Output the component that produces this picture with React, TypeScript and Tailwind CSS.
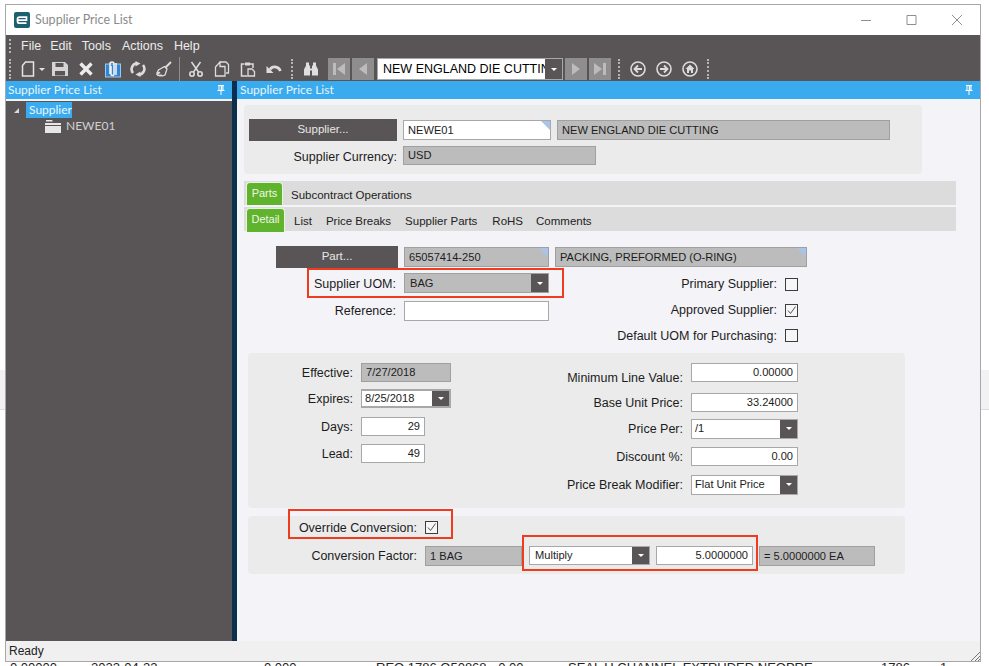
import type { ReactNode } from "react";

const ARIAL = "font-['Liberation_Sans',Arial,sans-serif]";

function Handle({ className = "" }: { className?: string }) {
  return <div className={`h-[20px] w-[2px] border-l-2 border-dotted border-[#b5b3b3] ${className}`} />;
}

function Glyph({ className = "", children }: { className?: string; children: ReactNode }) {
  return (
    <svg viewBox="0 0 16 16" className={`h-[16px] w-[16px] shrink-0 ${className}`} fill="none" stroke="#dcdcdc" strokeWidth="1.6">
      {children}
    </svg>
  );
}

function NavButton({ className = "", children }: { className?: string; children: ReactNode }) {
  return (
    <div className={`flex h-[22px] w-[22px] shrink-0 items-center justify-center bg-[#8f8d8d] ${className}`}>
      <svg viewBox="0 0 16 16" className="h-[16px] w-[16px]" fill="#bdbcbc">
        {children}
      </svg>
    </div>
  );
}

function Toolbar() {
  return (
    <div className="flex h-[24px] items-center pl-[3px]">
      <Handle />
      <svg viewBox="0 0 14 16" className="ml-[10px] h-[16px] w-[14px]" fill="none" stroke="#e4e4e4" strokeWidth="1.5">
        <path d="M4.5 1h8v14h-11V4.5z" />
      </svg>
      <div className="ml-[4px] h-0 w-0 border-x-[3px] border-t-[3px] border-x-transparent border-t-[#e4e4e4]" />
      <Glyph className="ml-[7px]">
        <path fill="#d4d4d4" stroke="none" fillRule="evenodd" d="M0 1h13l3 3v11H0zM3.5 2v4h8V2zM3 10v4.5h10V10z" />
      </Glyph>
      <svg viewBox="0 0 14 14" className="ml-[11px] h-[14px] w-[14px]" stroke="#ececec" strokeWidth="3.4">
        <path d="M1.5 1.5l11 11M12.5 1.5l-11 11" />
      </svg>
      <svg viewBox="0 0 16 18" className="ml-[12px] h-[18px] w-[16px]">
        <rect x="0.5" y="4" width="15" height="13" fill="#2f86d6" stroke="#9cc8ef" />
        <path d="M5 14V4a2 2 0 0 1 4 0v10a1.4 1.4 0 0 1-3 0V6M11 15V3" fill="none" stroke="#f2f2f2" strokeWidth="1.6" />
      </svg>
      <Glyph className="ml-[9px]">
        <path d="M3 12A6 6 0 0 1 7 2.2" strokeWidth="2.6" />
        <path d="M13 4a6 6 0 0 1-4 9.8" strokeWidth="2.6" />
        <path fill="#dcdcdc" stroke="none" d="M5.5 0l5 2.5-5 3zM10.5 16l-5-2.500 5-3z" />
      </Glyph>
      <Glyph className="ml-[10px]">
        <path d="M15 1L9.500 6.500" strokeWidth="2" />
        <path d="M8.500 5.500l2.500 2.500-2 6-3 1-1-1-1 1-1-1-1 .5-1-1 3-2-3 .5 1.500-3z" strokeWidth="1.300" />
      </Glyph>
      <div className="ml-[7px] h-[26px] w-px self-start bg-[#8d8b8b]" />
      <Glyph className="ml-[8px]">
        <path d="M12.500 1L5.500 11M3.500 1l7 10" strokeWidth="1.500" />
        <circle cx="4" cy="13" r="2.200" />
        <circle cx="12" cy="13" r="2.200" />
      </Glyph>
      <Glyph className="ml-[10px]">
        <path d="M6 1h6l2.500 2.500V12H12M6 1L1.500 6v9H11V5.500H6z" strokeWidth="1.300" />
      </Glyph>
      <Glyph className="ml-[10px]">
        <path d="M4.500 3H1.500v12h6M10 3h3v4" strokeWidth="1.500" />
        <path d="M5 1.500h5v3H5z" fill="#dcdcdc" stroke="none" />
        <path d="M8 8h4l2.500 2.500V15H8z" strokeWidth="1.300" />
      </Glyph>
      <Glyph className="ml-[10px]">
        <path d="M4 8.500C6 5 12 4.500 14.500 10" strokeWidth="2.600" />
        <path fill="#dcdcdc" stroke="none" d="M0.500 5v7h7z" />
      </Glyph>
      <Handle className="ml-[9px]" />
      <Glyph className="ml-[10px]">
        <path fill="#e0dfdf" stroke="none" d="M3 1.500h3v3h1v3h2v-3h1v-3h3v3l2 4v6h-6v-5H7v5H1v-6l2-4z" />
      </Glyph>
      <NavButton className="ml-[9px]">
        <path d="M2 2h3v12H2zM14 2v12L6 8z" />
      </NavButton>
      <NavButton className="ml-[2px]">
        <path d="M12 2v12L4 8z" />
      </NavButton>
      <div className="ml-[3px] flex h-[22px] w-[186px] shrink-0 items-center border border-[#a9a8a8] bg-white">
        <div className={`h-full w-[167px] overflow-hidden whitespace-nowrap pl-[5px] text-[12.5px] leading-[20px] text-black ${ARIAL}`}>
          NEW ENGLAND DIE CUTTING
        </div>
        <div className="flex h-full flex-1 items-center justify-center bg-[#595556]">
          <div className="h-0 w-0 border-x-[3px] border-t-[3px] border-x-transparent border-t-white" />
        </div>
      </div>
      <NavButton className="ml-[2px]">
        <path d="M4 2v12l8-6z" />
      </NavButton>
      <NavButton className="ml-[2px]">
        <path d="M2 2v12l8-6zM11 2h3v12h-3z" />
      </NavButton>
      <Handle className="ml-[7px]" />
      <Glyph className="ml-[10px]">
        <circle cx="8" cy="8" r="7" />
        <path d="M12 8H5M8 4.500L4.500 8 8 11.500" strokeWidth="1.800" />
      </Glyph>
      <Glyph className="ml-[10px]">
        <circle cx="8" cy="8" r="7" />
        <path d="M4 8h7M8 4.500L11.500 8 8 11.500" strokeWidth="1.800" />
      </Glyph>
      <Glyph className="ml-[10px]">
        <circle cx="8" cy="8" r="7" />
        <path fill="#dcdcdc" stroke="none" d="M8 3.500L12.500 8H11v4H9V9.500H7V12H5V8H3.500z" />
      </Glyph>
      <Handle className="ml-[9px]" />
    </div>
  );
}

function Pin({ className = "" }: { className?: string }) {
  return (
    <svg viewBox="0 0 8 10" className={`h-[10px] w-[8px] ${className}`} fill="none" stroke="#fff" strokeWidth="1">
      <path d="M1 .5h6M2 .5v5h4v-5M.5 5.500h7M4 5.500V10" />
      <path d="M4.500 1v4" stroke="#fff" strokeWidth="1.500" />
    </svg>
  );
}

function PaneHeader({ title, className = "" }: { title: string; className?: string }) {
  return (
    <div className={`flex h-[18px] items-center justify-between bg-[#3aabee] pl-[2px] pr-[7px] font-['Lato',sans-serif] text-[12px] text-[#e8f5fd] ${className}`}>
      <span>{title}</span>
      <Pin />
    </div>
  );
}

function TreePane() {
  return (
    <div className="flex w-[226px] shrink-0 flex-col">
      <PaneHeader title="Supplier Price List" />
      <div className="flex flex-1 flex-col border-t-2 border-[#f3f3f8] bg-[#595556] font-['Lato',sans-serif] text-[12px]">
        <div className="flex h-[17px] items-center pl-[8px] pt-px">
          <div className="h-0 w-0 border-b-[5px] border-l-[5px] border-b-[#d8d8d8] border-l-transparent" />
          <span className="ml-[7px] flex h-[16px] w-[46px] items-center bg-[#3aabee] pl-[3px] text-[#eaf6fd]">Supplier</span>
        </div>
        <div className="flex h-[16px] items-center pl-[39px]">
          <svg viewBox="0 0 16 13" className="h-[13px] w-[16px]" fill="#e6e6e6">
            <path d="M1 0h6l1 1.500H1zM0 3h16v2H0zM0 6h16v7H0z" />
          </svg>
          <span className="ml-[5px] text-[#d0d0d0]">NEWE01</span>
        </div>
      </div>
    </div>
  );
}

function Label({ width, className = "", children }: { width: string; className?: string; children: ReactNode }) {
  return <div className={`shrink-0 whitespace-nowrap text-right text-[12.5px] leading-[14px] text-[#1c1c1c] ${width} ${className}`}>{children}</div>;
}

function Corner() {
  return <div className="absolute right-0 top-0 h-0 w-0 border-l-[9px] border-t-[9px] border-l-transparent border-t-[#a9c4e6]" />;
}

function Field({
  box,
  readOnly = false,
  corner = false,
  right = false,
  children,
}: {
  box: string;
  readOnly?: boolean;
  corner?: boolean;
  right?: boolean;
  children?: ReactNode;
}) {
  return (
    <div
      className={`relative flex shrink-0 items-center whitespace-nowrap border px-[4px] text-[11.1px] text-[#1c1c1c] ${box} ${
        readOnly ? "border-[#a0a0a0] bg-[#bcbcbc]" : "border-[#a8a8a8] bg-white"
      } ${right ? "justify-end" : ""}`}
    >
      {children}
      {corner && <Corner />}
    </div>
  );
}

function Dropdown({ box, readOnly = false, children }: { box: string; readOnly?: boolean; children: ReactNode }) {
  return (
    <div className={`flex shrink-0 items-center border text-[11.1px] text-[#1c1c1c] ${box} ${readOnly ? "border-[#a0a0a0] bg-[#bcbcbc]" : "border-[#a8a8a8] bg-white"}`}>
      <span className="flex-1">{children}</span>
      <div className="flex h-full w-[17px] items-center justify-center bg-[#595556]">
        <div className="h-0 w-0 border-x-[3px] border-t-[3px] border-x-transparent border-t-white" />
      </div>
    </div>
  );
}

function Check({ checked = false }: { checked?: boolean }) {
  return (
    <div className="flex h-[13px] w-[13px] shrink-0 items-center justify-center border border-[#3c3c3c] bg-[#f6f6f8]">
      {checked && (
        <svg viewBox="0 0 11 11" className="h-[11px] w-[11px]" fill="none" stroke="#555" strokeWidth="1">
          <path d="M2 5.500L4.500 8.500 9.500 1.500" />
        </svg>
      )}
    </div>
  );
}

function DarkButton({ box, children }: { box: string; children: ReactNode }) {
  return <div className={`flex shrink-0 items-center justify-center bg-[#595556] text-[11.5px] text-[#e8e8e8] ${box}`}>{children}</div>;
}

function TabStrip({ active, activeBox, tabs, className = "" }: { active: string; activeBox: string; tabs: [string, string][]; className?: string }) {
  return (
    <div className={`flex h-[24px] w-[712px] items-start bg-[#dcdcdc] pl-[2px] pt-px text-[11.5px] text-[#222] ${className}`}>
      <div className={`flex items-center justify-center rounded-t-[4px] border border-b-0 border-[#e8f4dc] bg-[#60b32c] pb-[2px] text-[11px] text-[#eef7e6] ${activeBox}`}>{active}</div>
      {tabs.map(([name, margin]) => (
        <div key={name} className={`whitespace-nowrap pt-[5px] ${margin}`}>
          {name}
        </div>
      ))}
    </div>
  );
}

function FormRow({ className = "", children }: { className?: string; children: ReactNode }) {
  return <div className={`flex items-center ${className}`}>{children}</div>;
}

function Form() {
  return (
    <div className={`flex min-w-0 flex-1 flex-col ${ARIAL}`}>
      <PaneHeader title="Supplier Price List" className="!pl-[3px]" />
      <div className="flex flex-1 flex-col bg-[#f3f3f8] pl-[7px]">
        <div className="mt-[6px] h-[69px] w-[678px] rounded-[4px] bg-[#ebebeb] pl-[5px] pt-[14px]">
          <FormRow>
            <DarkButton box="h-[22px] w-[148px]">Supplier...</DarkButton>
            <Field box="ml-[6px] h-[20px] w-[148px]" corner>
              NEWE01
            </Field>
            <Field box="ml-[6px] h-[20px] w-[333px]" readOnly>
              NEW ENGLAND DIE CUTTING
            </Field>
          </FormRow>
          <FormRow className="mt-[5px]">
            <Label width="w-[148px]" className="pt-[2px]">
              Supplier Currency:
            </Label>
            <Field box="ml-[6px] h-[19px] w-[193px]" readOnly>
              USD
            </Field>
          </FormRow>
        </div>

        <TabStrip
          className="mt-[7px]"
          active="Parts"
          activeBox="h-[23px] w-[37px]"
          tabs={[["Subcontract Operations", "ml-[8px]"]]}
        />
        <TabStrip
          className="mt-[2px]"
          active="Detail"
          activeBox="h-[24px] w-[39px]"
          tabs={[
            ["List", "ml-[9px]"],
            ["Price Breaks", "ml-[14px]"],
            ["Supplier Parts", "ml-[14px]"],
            ["RoHS", "ml-[15px]"],
            ["Comments", "ml-[13px]"],
          ]}
        />

        <FormRow className="ml-[32px] mt-[15px]">
          <DarkButton box="h-[22px] w-[122px]">Part...</DarkButton>
          <Field box="ml-[6px] h-[20px] w-[145px]" readOnly corner>
            65057414-250
          </Field>
          <Field box="ml-[6px] h-[20px] w-[252px]" readOnly corner>
            PACKING, PREFORMED (O-RING)
          </Field>
        </FormRow>

        <div className="flex">
          <div className="w-[305px] shrink-0">
            <FormRow className="mt-[5px]">
              <Label width="w-[152px]" className="pt-[2px]">
                Supplier UOM:
              </Label>
              <Dropdown box="ml-[8px] h-[20px] w-[145px] pl-[5px]" readOnly>
                BAG
              </Dropdown>
            </FormRow>
            <FormRow className="mt-[8px]">
              <Label width="w-[152px]">Reference:</Label>
              <Field box="ml-[8px] h-[20px] w-[145px]" />
            </FormRow>
          </div>
          <div className="ml-[28px] flex flex-col gap-[12px] pt-[9px]">
            <FormRow>
              <Label width="w-[200px]">Primary Supplier:</Label>
              <div className="ml-[8px]">
                <Check />
              </div>
            </FormRow>
            <FormRow>
              <Label width="w-[200px]">Approved Supplier:</Label>
              <div className="ml-[8px]">
                <Check checked />
              </div>
            </FormRow>
            <FormRow className="-mt-[2px]">
              <Label width="w-[200px]" className="pt-[2px]">
                Default UOM for Purchasing:
              </Label>
              <div className="ml-[8px]">
                <Check />
              </div>
            </FormRow>
          </div>
        </div>

        <div className="ml-[4px] mt-[10px] flex h-[155px] w-[657px] rounded-[4px] bg-[#ebebeb] pt-[10px]">
          <div className="flex w-[210px] flex-col">
            <FormRow className="h-[19px]">
              <Label width="w-[105px]">Effective:</Label>
              <Field box="ml-[8px] h-[19px] w-[90px]" readOnly>
                7/27/2018
              </Field>
            </FormRow>
            <FormRow className="mt-[7px] h-[19px]">
              <Label width="w-[105px]">Expires:</Label>
              <Dropdown box="ml-[8px] h-[19px] w-[90px] border-y-2 border-r-2 border-[#a0a0a0] pl-[3px]">8/25/2018</Dropdown>
            </FormRow>
            <FormRow className="mt-[9px] h-[19px]">
              <Label width="w-[105px]">Days:</Label>
              <Field box="ml-[8px] h-[19px] w-[64px]" right>
                29
              </Field>
            </FormRow>
            <FormRow className="mt-[8px] h-[19px]">
              <Label width="w-[105px]">Lead:</Label>
              <Field box="ml-[8px] h-[19px] w-[64px]" right>
                49
              </Field>
            </FormRow>
          </div>
          <div className="ml-[90px] flex flex-col">
            <FormRow className="h-[19px]">
              <Label width="w-[135px]" className="pt-[10px]">
                Minimum Line Value:
              </Label>
              <Field box="ml-[8px] h-[19px] w-[107px]" right>
                0.00000
              </Field>
            </FormRow>
            <FormRow className="mt-[11px] h-[19px]">
              <Label width="w-[135px]">Base Unit Price:</Label>
              <Field box="ml-[8px] h-[19px] w-[107px]" right>
                33.24000
              </Field>
            </FormRow>
            <FormRow className="mt-[7px] h-[19px]">
              <Label width="w-[135px]">Price Per:</Label>
              <Dropdown box="ml-[8px] h-[20px] w-[107px] pl-[3px]">/1</Dropdown>
            </FormRow>
            <FormRow className="mt-[9px] h-[19px]">
              <Label width="w-[135px]">Discount %:</Label>
              <Field box="ml-[8px] h-[19px] w-[107px]" right>
                0.00
              </Field>
            </FormRow>
            <FormRow className="mt-[9px] h-[19px]">
              <Label width="w-[135px]">Price Break Modifier:</Label>
              <Dropdown box="ml-[8px] h-[20px] w-[107px] pl-[3px]">Flat Unit Price</Dropdown>
            </FormRow>
          </div>
        </div>

        <div className="ml-[4px] mt-[8px] h-[58px] w-[657px] rounded-[4px] bg-[#ebebeb] pt-[5px]">
          <FormRow className="h-[13px]">
            <Label width="w-[169px]">Override Conversion:</Label>
            <div className="ml-[8px]">
              <Check checked />
            </div>
          </FormRow>
          <FormRow className="mt-[11px]">
            <Label width="w-[169px]">Conversion Factor:</Label>
            <Field box="ml-[8px] mt-[1px] h-[20px] w-[97px]" readOnly>
              1 BAG
            </Field>
            <Dropdown box="ml-[7px] h-[19px] w-[121px] pl-[5px]">Multiply</Dropdown>
            <Field box="ml-[6px] h-[19px] w-[97px]" right>
              5.0000000
            </Field>
            <Field box="ml-[6px] mt-[1px] h-[20px] w-[116px]" readOnly>
              = 5.0000000 EA
            </Field>
          </FormRow>
        </div>
      </div>
    </div>
  );
}

function Highlight({ box }: { box: string }) {
  return <div className={`pointer-events-none absolute border-2 border-[#f03c1e] ${box}`} />;
}

export default function App() {
  return (
    <div className="relative h-[666px] w-[989px] overflow-hidden bg-white">
      <div className="absolute left-0 top-[370px] h-[40px] w-full border-b border-[#dddddd] bg-[#f2f2f2]" />
      <div className={`absolute left-0 top-[661px] h-[14px] w-full text-[13px] leading-[14px] text-[#222] ${ARIAL}`}>
        <span className="absolute left-[10px]">0.00000</span>
        <span className="absolute left-[91px]">2022-04-22</span>
        <span className="absolute left-[264px]">0.000</span>
        <span className="absolute left-[376px]">REQ 1786 O50868 - 0.00</span>
        <span className="absolute left-[568px]">SEAL U CHANNEL EXTRUDED NEOPRE</span>
        <span className="absolute left-[881px]">1786</span>
        <span className="absolute left-[940px]">1</span>
      </div>

      <div className="absolute left-[5px] top-[4px] flex h-[658px] w-[976px] flex-col border border-[#a8a8a8] bg-white">
        <div className="flex h-[30px] shrink-0 items-center pl-[8px] pr-[18px]">
          <svg viewBox="0 0 16 16" className="h-[16px] w-[16px]">
            <rect width="16" height="16" rx="2" fill="#1d5f70" />
            <path d="M3.500 8.200h9V5.200H5.500a2 2 0 0 0-2 2v2a2 2 0 0 0 2 2h7" fill="none" stroke="#fff" strokeWidth="1.700" />
          </svg>
          <span className="ml-[5px] font-['Lato',sans-serif] text-[12.5px] text-[#8b8b8b]">Supplier Price List</span>
          <svg viewBox="0 0 101 12" className="ml-auto h-[12px] w-[101px]" fill="none" stroke="#8f8f8f" strokeWidth="1">
            <path d="M0 6.500h10M46 1.500h9v9h-9zM91 1l10 10M101 1L91 11" />
          </svg>
        </div>

        <div className="shrink-0 bg-[#595556]">
          <div className={`flex h-[22px] items-center pl-[3px] text-[12.5px] text-[#ececec] ${ARIAL}`}>
            <Handle className="!h-[14px]" />
            <span className="ml-[10px]">File</span>
            <span className="ml-[9px]">Edit</span>
            <span className="ml-[10px]">Tools</span>
            <span className="ml-[11px]">Actions</span>
            <span className="ml-[11px]">Help</span>
          </div>
          <Toolbar />
        </div>

        <div className="flex min-h-0 flex-1">
          <TreePane />
          <div className="w-[5px] shrink-0 bg-[#0c2f4e]" />
          <Form />
        </div>

        <div className={`relative flex h-[20px] shrink-0 items-center bg-[#f0f0f0] pl-[3px] text-[12px] text-[#222] ${ARIAL}`}>
          Ready
          <svg viewBox="0 0 9 9" className="absolute bottom-0 right-0 h-[9px] w-[9px]" stroke="#777" strokeWidth="1">
            <path d="M0 9l9-9M4 9l5-5M7 9l2-2" />
          </svg>
        </div>
      </div>

      <Highlight box="left-[307px] top-[268px] h-[30px] w-[257px]" />
      <Highlight box="left-[288px] top-[509px] h-[30px] w-[165px]" />
      <Highlight box="left-[522px] top-[535px] h-[36px] w-[236px]" />
    </div>
  );
}
